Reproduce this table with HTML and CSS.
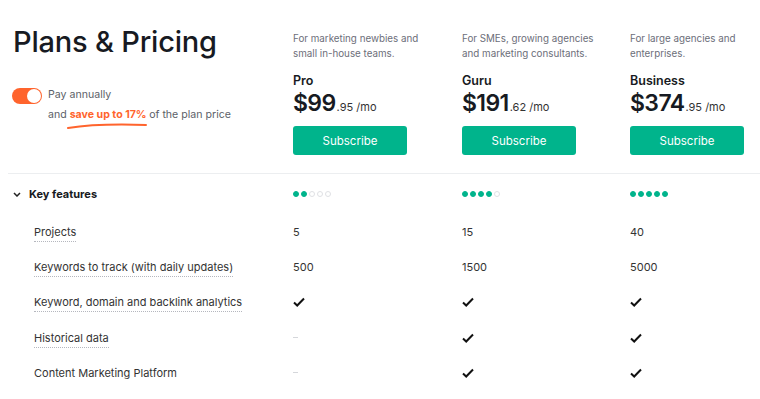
FILE: index.html
```html
<!DOCTYPE html>
<html lang="en">
<head>
    <meta charset="UTF-8">
    <meta name="viewport" content="width=device-width, initial-scale=1.0">
    <title>Plans &amp; Pricing</title>
    <link rel="stylesheet" href="styles.css">
</head>
<body>
    <div class="page">
        <div class="header">
            <div class="intro">
                <h1>Plans &amp; Pricing</h1>
                <div class="billing">
                    <span class="toggle"><span class="knob"></span></span>
                    <div class="billing-text">
                        <p>Pay annually</p>
                        <p>and <span class="save">save up to 17%
                            <svg class="swoosh" width="80" height="6" viewBox="0 0 80 6"><path d="M1 5 C 20 2, 50 1, 79 2" stroke="#ff642d" stroke-width="2" fill="none" stroke-linecap="round"/></svg>
                        </span> of the plan price</p>
                    </div>
                </div>
            </div>

            <div class="plan">
                <p class="plan-desc">For marketing newbies and small in-house teams.</p>
                <h3>Pro</h3>
                <div class="price"><span class="amount">$99</span><span class="cents">.95 /mo</span></div>
                <button class="subscribe">Subscribe</button>
            </div>

            <div class="plan">
                <p class="plan-desc">For SMEs, growing agencies and marketing consultants.</p>
                <h3>Guru</h3>
                <div class="price"><span class="amount">$191</span><span class="cents">.62 /mo</span></div>
                <button class="subscribe">Subscribe</button>
            </div>

            <div class="plan">
                <p class="plan-desc">For large agencies and enterprises.</p>
                <h3>Business</h3>
                <div class="price"><span class="amount">$374</span><span class="cents">.95 /mo</span></div>
                <button class="subscribe">Subscribe</button>
            </div>
        </div>

        <div class="features">
            <div class="row group">
                <div class="label">
                    <svg class="chevron" width="8" height="5" viewBox="0 0 8 5"><path d="M1 1 L4 4 L7 1" stroke="#222" stroke-width="1.5" fill="none"/></svg>
                    Key features
                </div>
                <div class="dots"><i class="on"></i><i class="on"></i><i></i><i></i><i></i></div>
                <div class="dots"><i class="on"></i><i class="on"></i><i class="on"></i><i class="on"></i><i></i></div>
                <div class="dots"><i class="on"></i><i class="on"></i><i class="on"></i><i class="on"></i><i class="on"></i></div>
            </div>

            <div class="row">
                <div class="label"><span class="term">Projects</span></div>
                <div class="value">5</div>
                <div class="value">15</div>
                <div class="value">40</div>
            </div>

            <div class="row">
                <div class="label"><span class="term">Keywords to track (with daily updates)</span></div>
                <div class="value">500</div>
                <div class="value">1500</div>
                <div class="value">5000</div>
            </div>

            <div class="row">
                <div class="label"><span class="term">Keyword, domain and backlink analytics</span></div>
                <div class="value"><svg class="check" width="12" height="10" viewBox="0 0 12 10"><path d="M1 5.5 L4.2 8.5 L11 1.5" stroke="#111" stroke-width="2" fill="none"/></svg></div>
                <div class="value"><svg class="check" width="12" height="10" viewBox="0 0 12 10"><path d="M1 5.5 L4.2 8.5 L11 1.5" stroke="#111" stroke-width="2" fill="none"/></svg></div>
                <div class="value"><svg class="check" width="12" height="10" viewBox="0 0 12 10"><path d="M1 5.5 L4.2 8.5 L11 1.5" stroke="#111" stroke-width="2" fill="none"/></svg></div>
            </div>

            <div class="row">
                <div class="label"><span class="term">Historical data</span></div>
                <div class="value"><span class="dash"></span></div>
                <div class="value"><svg class="check" width="12" height="10" viewBox="0 0 12 10"><path d="M1 5.5 L4.2 8.5 L11 1.5" stroke="#111" stroke-width="2" fill="none"/></svg></div>
                <div class="value"><svg class="check" width="12" height="10" viewBox="0 0 12 10"><path d="M1 5.5 L4.2 8.5 L11 1.5" stroke="#111" stroke-width="2" fill="none"/></svg></div>
            </div>

            <div class="row">
                <div class="label"><span class="term plain">Content Marketing Platform</span></div>
                <div class="value"><span class="dash"></span></div>
                <div class="value"><svg class="check" width="12" height="10" viewBox="0 0 12 10"><path d="M1 5.5 L4.2 8.5 L11 1.5" stroke="#111" stroke-width="2" fill="none"/></svg></div>
                <div class="value"><svg class="check" width="12" height="10" viewBox="0 0 12 10"><path d="M1 5.5 L4.2 8.5 L11 1.5" stroke="#111" stroke-width="2" fill="none"/></svg></div>
            </div>
        </div>
    </div>
</body>
</html>
```

FILE: styles.css
```css
body {
    margin: 0;
    font-family: Inter, "Noto Sans", Arial, sans-serif;
    color: #171a22;
    background-color: white;
}
p, h1, h3 {
    margin: 0;
}
.page {
    width: 760px;
}
.header,
.row {
    display: grid;
    grid-template-columns: 293px 169px 168px 1fr;
}
.header {
    height: 173px;
    border-bottom: 1px solid #eceef0;
    margin-left: 8px;
    grid-template-columns: 285px 169px 168px 1fr;
}

/* left intro */
.intro {
    padding: 23px 0 0 5px;
}
h1 {
    font-size: 29px;
    font-weight: 500;
    letter-spacing: -0.2px;
    line-height: 38px;
}
.billing {
    display: flex;
    gap: 6px;
    margin-top: 27px;
}
.toggle {
    width: 30px;
    height: 16px;
    border-radius: 8px;
    background-color: #ff642d;
    display: flex;
    justify-content: flex-end;
    align-items: center;
    padding: 0 1px;
    box-sizing: border-box;
    margin-left: -1px;
}
.knob {
    width: 14px;
    height: 14px;
    border-radius: 50%;
    background-color: white;
}
.billing-text {
    font-size: 10.6px;
    line-height: 20px;
    color: #5c5f68;
    margin-top: -3px;
}
.save {
    color: #ff642d;
    font-weight: 700;
    position: relative;
}
.swoosh {
    position: absolute;
    left: -3px;
    top: 15px;
}

/* plan columns */
.plan {
    padding-top: 31px;
}
.plan-desc {
    font-size: 9.8px;
    line-height: 15px;
    color: #6c6e79;
    width: 140px;
    height: 33px;
}
h3 {
    font-size: 12.5px;
    font-weight: 600;
    line-height: 16px;
    margin-top: 9px;
}
.price {
    display: flex;
    align-items: baseline;
    height: 29px;
}
.amount {
    font-size: 23px;
    font-weight: 600;
    letter-spacing: -0.6px;
}
.cents {
    font-size: 11px;
    color: #333;
    margin-left: 1px;
}
.subscribe {
    display: block;
    width: 114px;
    height: 29px;
    margin-top: 8px;
    border: none;
    border-radius: 3px;
    background-color: #00b48c;
    color: white;
    font-family: inherit;
    font-size: 11.5px;
    cursor: pointer;
}

/* feature table */
.features {
    display: flex;
    flex-direction: column;
}
.row {
    height: 35.3px;
    align-items: center;
    font-size: 11px;
    color: #333;
}
.row.group {
    height: 40px;
}
.group .label {
    padding-left: 13px;
    font-weight: 700;
    color: #171a22;
    font-size: 11px;
    display: flex;
    align-items: center;
    gap: 8px;
}
.label {
    padding-left: 34px;
}
.term {
    border-bottom: 1px dotted #b5b7be;
    padding-bottom: 2px;
}
.term.plain {
    border-bottom-color: transparent;
}
.dots {
    display: flex;
    gap: 2px;
}
.dots i {
    width: 4px;
    height: 4px;
    border-radius: 50%;
    border: 1px solid #dfe1e4;
}
.dots i.on {
    background-color: #00b48c;
    border-color: #00b48c;
}
.value {
    display: flex;
    align-items: center;
}
.dash {
    width: 5px;
    height: 1px;
    background-color: #d5d7db;
}
```
